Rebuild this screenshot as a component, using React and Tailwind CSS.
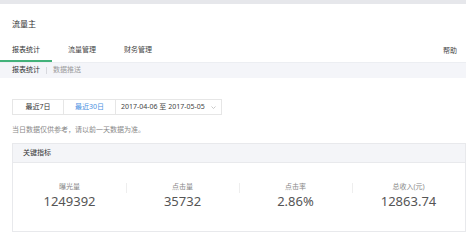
export default function App() {
  const stats = [
    { label: '曝光量', value: '1249392' },
    { label: '点击量', value: '35732' },
    { label: '点击率', value: '2.86%' },
    { label: '总收入(元)', value: '12863.74' },
  ];

  return (
    <div className="w-[466px] h-[240px] overflow-hidden bg-white text-[#333] font-['Noto_Sans','Noto_Sans_CJK_SC',sans-serif]">
      {/* top strip */}
      <div className="h-[4px] bg-[#e6e7eb]"></div>

      {/* page title */}
      <div className="h-[36px] flex items-center pl-[12px] pt-[4px] text-[8px] text-[#333]">流量主</div>

      {/* main tabs */}
      <div className="h-[22px] flex items-stretch justify-between">
        <div className="flex gap-[4px] text-[7px]">
          <div className="px-[12px] flex items-center border-b-2 border-[#43b27a] text-[#333]">报表统计</div>
          <div className="px-[12px] flex items-center border-b-2 border-transparent text-[#444]">流量管理</div>
          <div className="px-[12px] flex items-center border-b-2 border-transparent text-[#444]">财务管理</div>
        </div>
        <div className="pr-[9px] flex items-center text-[7px] text-[#444]">帮助</div>
      </div>

      {/* sub nav */}
      <div className="h-[16px] bg-[#f4f5f9] border-t border-[#eceef2] flex items-center pl-[12px] text-[7px]">
        <span className="text-[#333]">报表统计</span>
        <span className="mx-[6px] w-px h-[7px] bg-[#d8d9de]"></span>
        <span className="text-[#999]">数据推送</span>
      </div>

      {/* date filter */}
      <div className="px-[12px] pt-[21px]">
        <div className="flex w-[210px] h-[16px] border border-[#e6e6e6] text-[7px]">
          <div className="w-[51px] flex items-center justify-center border-r border-[#e6e6e6] text-[#333]">最近7日</div>
          <div className="w-[52px] flex items-center justify-center border-r border-[#e6e6e6] text-[#4a90e2]">最近30日</div>
          <div className="flex-1 flex items-center justify-between pl-[5px] pr-[5px] text-[7px] text-[#444] whitespace-nowrap">
            <span>2017-04-06 至 2017-05-05</span>
            <svg width="5" height="3" viewBox="0 0 5 3"><path d="M0.5 0.5 L2.5 2.5 L4.5 0.5" fill="none" stroke="#bbb" strokeWidth="0.8" /></svg>
          </div>
        </div>
      </div>

      {/* notice */}
      <div className="pl-[12px] pt-[10px] text-[7px] text-[#888] leading-[10px]">当日数据仅供参考，请以前一天数据为准。</div>

      {/* key metrics card */}
      <div className="ml-[12px] mt-[8px] w-[454px] h-[89px] border border-[#e8e9ec]">
        <div className="h-[19px] bg-[#f4f5f8] border-b border-[#e8e9ec] flex items-center pl-[10px] text-[7px] text-[#333]">关键指标</div>
        <div className="grid grid-cols-4 pt-[19px]">
          {stats.map((s, i) => (
            <div key={s.label} className="relative flex flex-col items-center">
              {i > 0 && <div className="absolute left-0 top-[1px] w-px h-[10px] bg-[#eeeeee]"></div>}
              <div className="text-[7px] leading-[10px] text-[#888]">{s.label}</div>
              <div className="text-[13px] leading-[16px] text-[#555] mt-[1px]">{s.value}</div>
            </div>
          ))}
        </div>
      </div>
    </div>
  );
}
